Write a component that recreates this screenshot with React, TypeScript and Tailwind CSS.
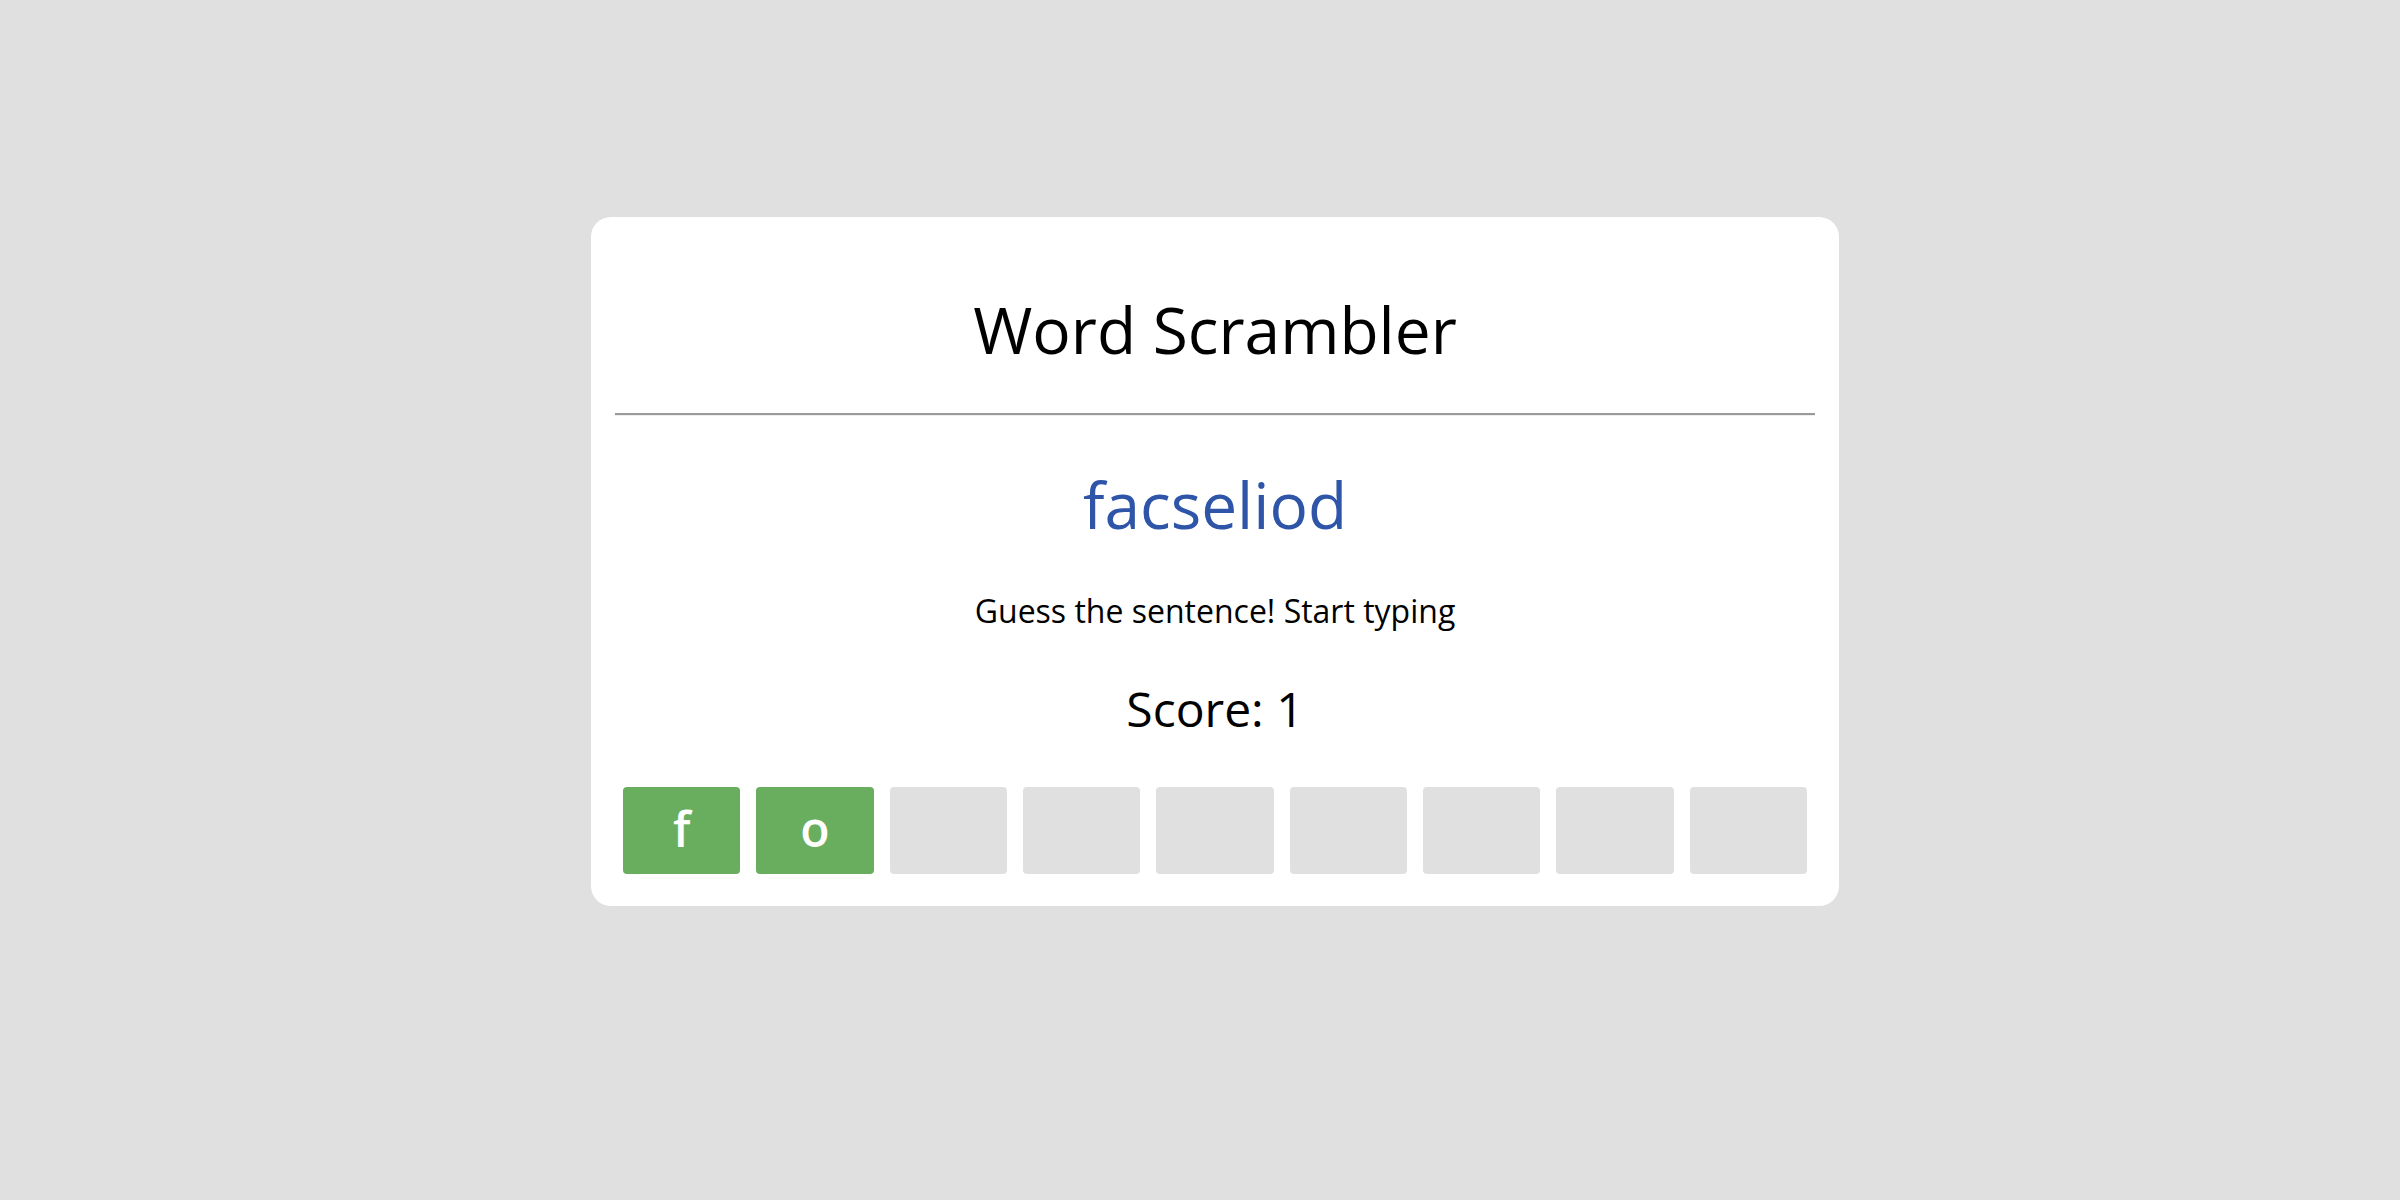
import React from "react";

export default function App() {
  const letters = ["f", "o", "", "", "", "", "", "", ""];
  return (
    <div
      className="min-h-screen w-full bg-[#e0e0e0] pl-[591px] pt-[217px]"
      style={{ fontFamily: '"Open Sans", "Noto Sans", sans-serif' }}
    >
      <div className="w-[1248px] rounded-[20px] bg-white px-6 pt-[69px] pb-[32px] text-center text-black">
        <h1 className="text-[64px] leading-[87px] font-normal">Word Scrambler</h1>
        <hr className="mt-[40px] h-0 border-0 border-t-2 border-b border-t-[#9a9a9a] border-b-[#eeeeee]" />
        <div className="mt-[45px] text-[64px] leading-[87px] text-[#2e55a8]">facseliod</div>
        <p className="mt-[41px] text-[32px] leading-[44px]">Guess the sentence! Start typing</p>
        <div className="mt-[43px] text-[48px] leading-[65px]">Score: 1</div>
        <div className="mt-[46px] flex">
          {letters.map((l, i) => (
            <div
              key={i}
              className={
                "mx-2 flex h-[87px] flex-1 items-center justify-center rounded-[4px] pb-[4px] text-[48px] leading-[65px] font-semibold text-white " +
                (l ? "bg-[#69ae5e]" : "bg-[#e0e0e0]")
              }
            >
              {l}
            </div>
          ))}
        </div>
      </div>
    </div>
  );
}
